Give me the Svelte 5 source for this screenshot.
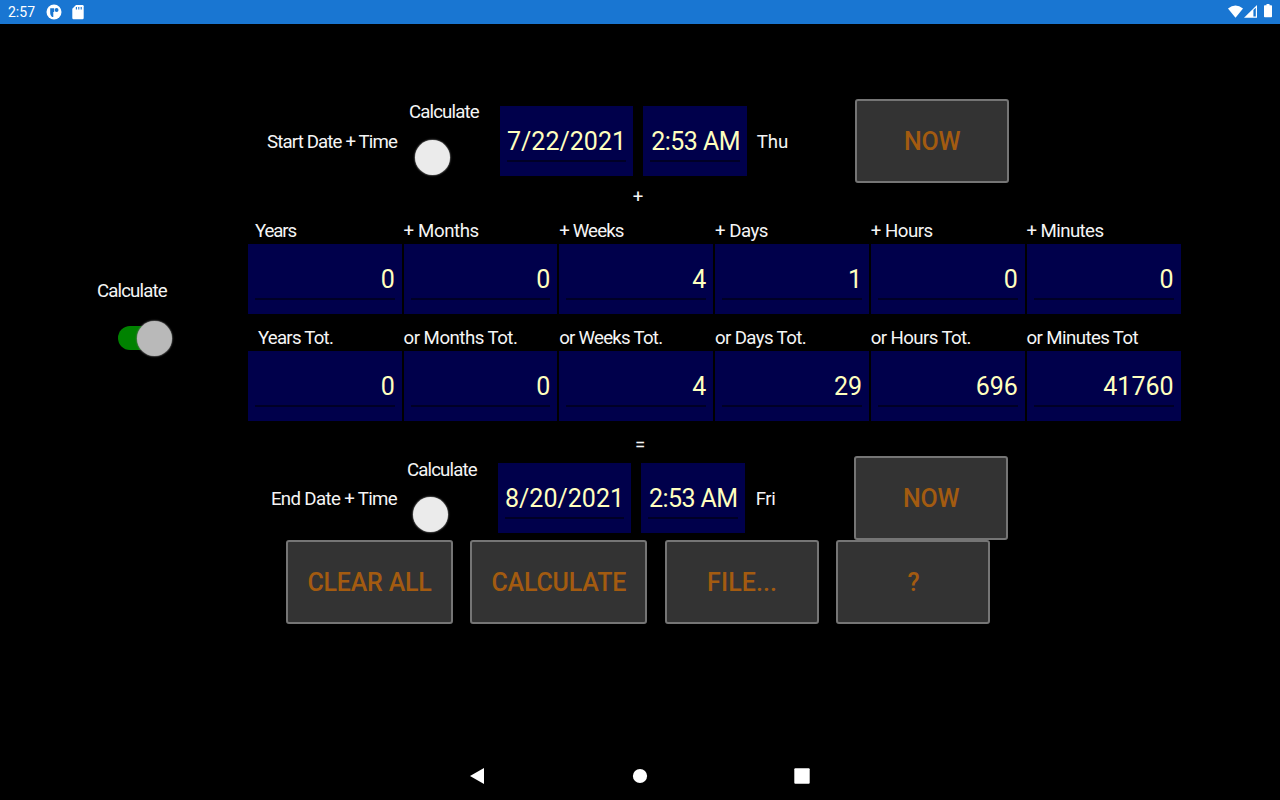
<script>
  const dateRows = {
    start: { label: 'Start Date + Time', track: -0.86, date: '7/22/2021', time: '2:53 AM', day: 'Thu' },
    end: { label: 'End Date + Time', track: -0.65, date: '8/20/2021', time: '2:53 AM', day: 'Fri' }
  };
  const parts = [
    ['Years', '0', -1.15],
    ['+ Months', '0', -0.4],
    ['+ Weeks', '4', -0.85],
    ['+ Days', '1', -0.5],
    ['+ Hours', '0', -0.5],
    ['+ Minutes', '0', -0.6]
  ];
  const totals = [
    ['Years Tot.', '0', -0.77],
    ['or Months Tot.', '0', -0.52],
    ['or Weeks Tot.', '4', -0.75],
    ['or Days Tot.', '29', -0.62],
    ['or Hours Tot.', '696', -0.6],
    ['or Minutes Tot', '41760', -0.6]
  ];
</script>

{#snippet dateRow(row, kind)}
  <div class="date-row {kind}">
    <span class="row-label"><span style:letter-spacing="{row.track}px">{row.label}</span></span>
    <div class="toggle">
      <span class="caption">Calculate</span>
      <i class="thumb"></i>
    </div>
    <div class="field date">{row.date}</div>
    <div class="field time">{row.time}</div>
    <span class="day">{row.day}</span>
    <button>NOW</button>
  </div>
{/snippet}

{#snippet grid(items, kind)}
  <div class="grid {kind}">
    {#each items as [name, value, track]}
      <div class="cell">
        <span style:letter-spacing="{track}px">{name}</span>
        <div class="field number">{value}</div>
      </div>
    {/each}
  </div>
{/snippet}

<div class="screen">
  <header>
    <span class="clock">2:57</span>
    <svg class="app-icon" width="16" height="16" viewBox="0 0 16 16">
      <circle cx="8" cy="8" r="7.5" fill="#fff" />
      <path d="M4.2 4.2h4v3.9H7.3v5H6Q4.2 11.6 4.2 9.3z" fill="#1976d2" />
      <circle cx="10.6" cy="6" r="1.9" fill="#1976d2" />
    </svg>
    <svg class="sd-icon" width="12" height="15" viewBox="0 0 12 15">
      <path d="M4 0h6.5Q11.7 0 11.7 1.2v11.7q0 1.3-1.2 1.3h-9Q.3 14.2.3 12.9V3.8z" fill="#fff" />
      <path d="M4.4 2v2.4M6.8 2v2.4M9.2 2v2.4" stroke="#1976d2" stroke-width="1.1" />
    </svg>
    <div class="system">
      <svg width="45" height="16" viewBox="0 0 45 16">
        <path d="M0 4.4Q7.5-1.4 15 4.4L7.5 13.7z" fill="#fff" />
        <path d="M16 13.7 29 1v12.7z" fill="#fff" />
        <path d="M25.4 6.1 27.8 3.7v8.8h-2.4z" fill="#1976d2" />
        <path d="M38.5 0h3v1.3h1.7q.8 0 .8.8v10.3q0 .8-.8.8h-6.4q-.8 0-.8-.8V2.1q0-.8.8-.8h1.7z" fill="#fff" />
      </svg>
    </div>
  </header>

  <main>
    {@render dateRow(dateRows.start, 'start')}
    <div class="operator plus">+</div>
    <section>
      <div class="side">
        <span class="caption">Calculate</span>
        <div class="track"><i class="thumb on"></i></div>
      </div>
      <div class="grids">
        {@render grid(parts, 'parts')}
        {@render grid(totals, 'totals')}
      </div>
    </section>
    <div class="operator equals">=</div>
    {@render dateRow(dateRows.end, 'end')}
    <div class="actions">
      <button class="clear">CLEAR ALL</button>
      <button class="calc">CALCULATE</button>
      <button class="file">FILE...</button>
      <button>?</button>
    </div>
  </main>

  <nav>
    <svg width="16" height="16" viewBox="0 0 16 16"><path d="M0 8 14 0v16z" fill="#fff" /></svg>
    <svg width="16" height="16" viewBox="0 0 16 16"><circle cx="8" cy="8" r="7.1" fill="#fff" /></svg>
    <svg width="16" height="16" viewBox="0 0 16 16"><rect x=".3" y=".3" width="15.4" height="15.4" rx="1" fill="#fff" /></svg>
  </nav>
</div>

<style>
  :global(body) {
    margin: 0;
    background: #000;
  }
  .screen {
    width: 1280px;
    height: 800px;
    display: flex;
    flex-direction: column;
    overflow: hidden;
    background: #000;
    color: #f5f5f5;
    font: 18.67px/22px Roboto, sans-serif;
    white-space: nowrap;
  }
  header {
    flex: none;
    box-sizing: border-box;
    height: 24px;
    display: flex;
    align-items: flex-start;
    padding: 4px 7px 0 8px;
    background: #1976d2;
    color: #fff;
  }
  .clock {
    width: 38px;
    font-size: 14px;
    line-height: 17px;
  }
  .sd-icon {
    margin: 1px 0 0 10px;
  }
  .system {
    margin-left: auto;
  }
  .system svg,
  nav svg {
    display: block;
  }
  main {
    flex: 1;
    padding-top: 75px;
  }
  .date-row {
    display: flex;
    align-items: flex-start;
    height: 84px;
  }
  .row-label {
    width: 397px;
    padding-top: 32px;
    text-align: right;
  }
  .caption {
    letter-spacing: -0.87px;
  }
  .toggle {
    width: 91px;
    margin-left: 12px;
    padding-top: 2px;
  }
  .end .toggle {
    margin-left: 10px;
    padding-top: 3px;
  }
  .thumb {
    display: block;
    width: 35px;
    height: 35px;
    margin: 17px 0 0 6px;
    border-radius: 50%;
    background: #ebebeb;
    box-shadow: 0 0 1.5px 0.5px #777;
  }
  .end .thumb {
    margin-top: 16px;
  }
  .field {
    box-sizing: border-box;
    height: 70px;
    padding: 21px 7px 0;
    background: linear-gradient(#000026, #000026) 7px 54px / calc(100% - 14px) 2px no-repeat #00004b;
    color: #ffffbf;
    font-size: 25px;
    line-height: 30px;
  }
  .date {
    width: 133.3px;
    margin-top: 7px;
  }
  .time {
    width: 103.4px;
    margin: 7px 10px 0;
    padding-left: 8px;
    letter-spacing: -0.55px;
  }
  .end .time {
    padding-left: 7.6px;
  }
  .day {
    width: 98px;
    padding-top: 32px;
  }
  .end .day {
    padding-left: 1px;
    letter-spacing: -0.4px;
  }
  button {
    box-sizing: border-box;
    width: 154px;
    height: 84px;
    padding: 2px 0 0 1px;
    border: 2px solid #757575;
    border-radius: 3px;
    background: #333;
    color: #a35b10;
    font: 500 25px/30px Roboto, sans-serif;
    letter-spacing: -0.2px;
  }
  .clear,
  .calc {
    padding-left: 0;
  }
  .file {
    letter-spacing: 0.1px;
  }
  .operator {
    text-align: center;
  }
  .plus {
    height: 37px;
    padding: 3px 4px 0 0;
    box-sizing: border-box;
  }
  section {
    display: flex;
  }
  .side {
    width: 151px;
    padding: 60px 0 0 97px;
  }
  .track {
    width: 53.6px;
    height: 24px;
    margin: 24px 0 0 21px;
    border-radius: 12px;
    background: #008200;
    display: flex;
    align-items: center;
    justify-content: flex-end;
  }
  .thumb.on {
    margin: 0;
    background: #b9b9b9;
  }
  .grids {
    width: 933px;
  }
  .grid {
    display: grid;
    grid-template-columns: 153.8px 153.8px 154px 154px 154px 154px;
    column-gap: 1.8px;
  }
  .cell > span {
    display: block;
    height: 24px;
  }
  .totals {
    margin-top: 13px;
  }
  .parts .cell:first-child > span {
    padding-left: 7px;
  }
  .totals .cell:first-child > span {
    padding-left: 10px;
  }
  .number {
    text-align: right;
  }
  .equals {
    height: 35px;
    padding-top: 13px;
    box-sizing: border-box;
  }
  .actions {
    display: flex;
    gap: 17.3px;
    padding-left: 286px;
  }
  .clear {
    width: 167px;
  }
  .calc {
    width: 177px;
  }
  nav {
    flex: none;
    display: flex;
    justify-content: space-between;
    height: 32px;
    padding: 0 470px;
  }
</style>
